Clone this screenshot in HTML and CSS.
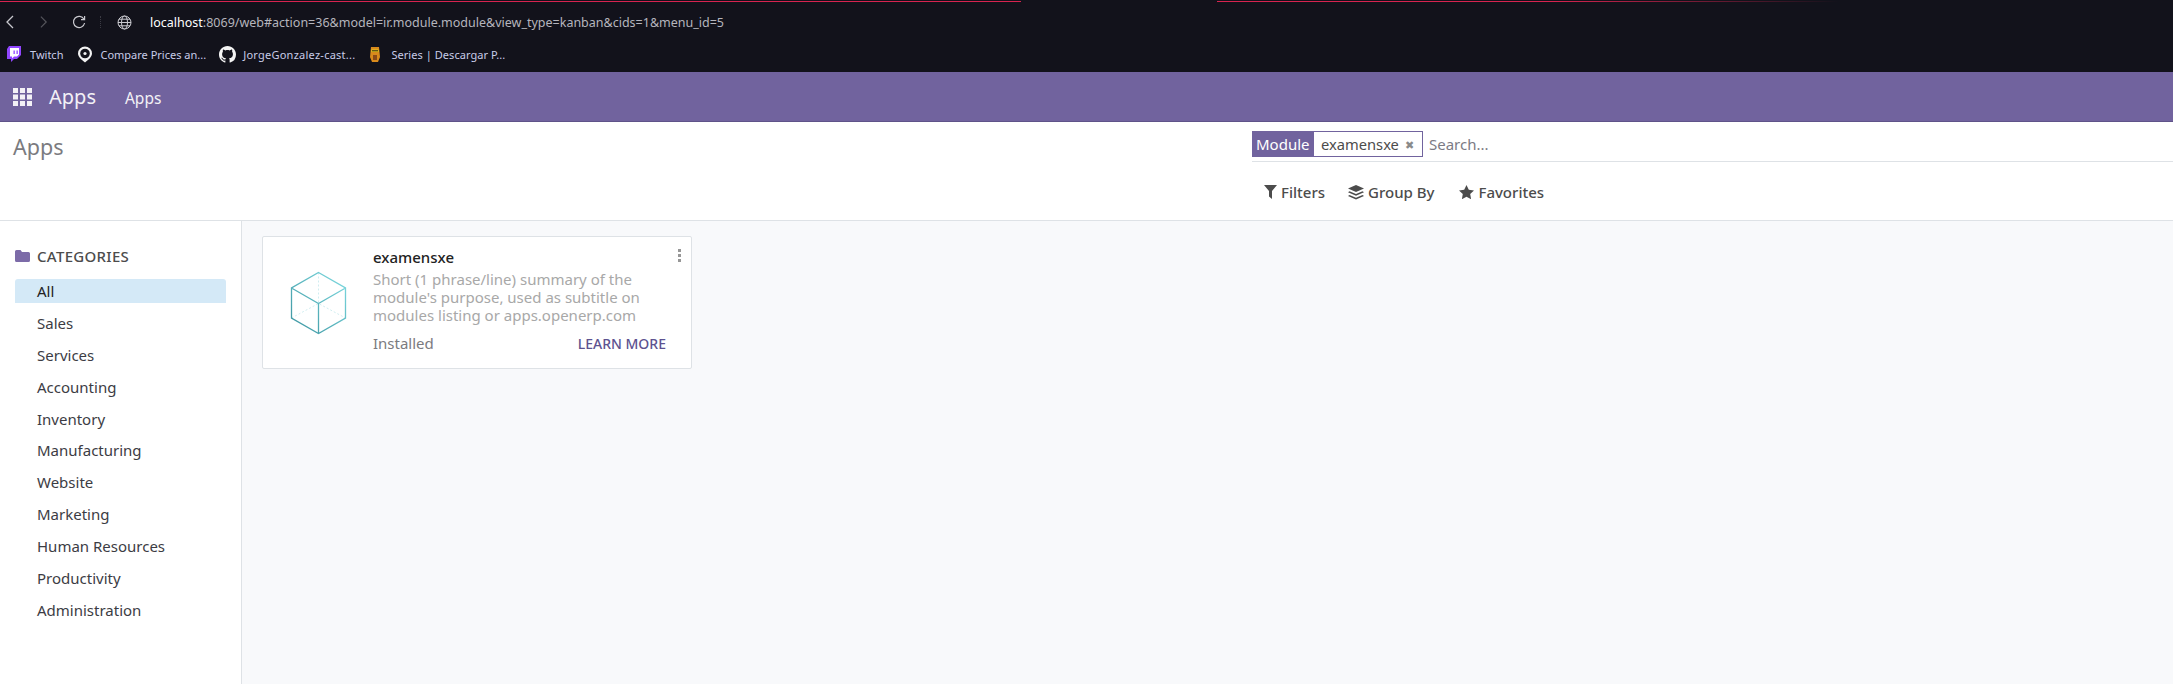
FILE: index.html
```html
<!DOCTYPE html>
<html lang="en">
<head>
    <meta charset="UTF-8">
    <meta name="viewport" content="width=device-width, initial-scale=1.0">
    <title>Apps</title>
    <link rel="stylesheet" href="styles.css">
</head>
<body>
    <div class="browser">
        <div class="tab-line">
            <div class="tab-line-left"></div>
            <div class="tab-line-right"></div>
        </div>
        <div class="address-row">
            <svg class="nav-back" width="9" height="14" viewBox="0 0 9 14"><path d="M8 1 2 7l6 6" fill="none" stroke="#c9c9cf" stroke-width="1.3"/></svg>
            <svg class="nav-forward" width="8" height="14" viewBox="0 0 9 14"><path d="M1 1l6 6-6 6" fill="none" stroke="#55555c" stroke-width="1.3"/></svg>
            <svg class="nav-reload" width="14" height="14" viewBox="0 0 14 14"><path d="M12 4.2A5.6 5.6 0 1 0 12.6 8" fill="none" stroke="#c9c9cf" stroke-width="1.2"/><path d="M12.6 1v3.6H9" fill="none" stroke="#c9c9cf" stroke-width="1.2"/></svg>
            <span class="nav-dots"></span>
            <svg class="nav-globe" width="15" height="15" viewBox="0 0 15 15" fill="none" stroke="#c9c9cf" stroke-width="1"><circle cx="7.5" cy="7.5" r="6.5"/><ellipse cx="7.5" cy="7.5" rx="3" ry="6.5"/><path d="M1 7.5h13M2 4.2h11M2 10.8h11"/></svg>
            <span class="url"><b>localhost</b>:8069/web#action=36&amp;model=ir.module.module&amp;view_type=kanban&amp;cids=1&amp;menu_id=5</span>
        </div>
        <div class="bookmarks">
            <div class="bookmark bm-twitch">
                <svg width="14" height="16" viewBox="0 0 14 16"><path d="M2 0h12v9l-4 4H7l-3 3v-3H0V3z" fill="#9146ff"/><path d="M3 2h9v6.5L10 10.500H7l-2 2v-2H3z" fill="#fff"/><path d="M6.500 4.500h1.300v3.500H6.500zM9.500 4.500h1.300v3.500H9.500z" fill="#9146ff"/></svg>
                <span>Twitch</span>
            </div>
            <div class="bookmark bm-compare">
                <svg width="16" height="17" viewBox="0 0 16 17"><path d="M8 .5a7 7 0 0 1 7 7c0 3.500-4 6.500-7 9-3-2.500-7-5.500-7-9a7 7 0 0 1 7-7z" fill="#f2f2f2"/><circle cx="8" cy="7.500" r="4.800" fill="#14141c"/><circle cx="8" cy="7.500" r="1.600" fill="#f2f2f2"/></svg>
                <span>Compare Prices an...</span>
            </div>
            <div class="bookmark bm-github">
                <svg width="17" height="17" viewBox="0 0 16 16"><path fill="#f4f4f4" d="M8 0C3.580 0 0 3.580 0 8c0 3.540 2.290 6.530 5.470 7.590.4.070.55-.17.55-.38 0-.19-.01-.82-.01-1.490-2.010.370-2.530-.49-2.690-.94-.09-.23-.48-.94-.82-1.130-.28-.15-.68-.52-.01-.53.63-.01 1.080.58 1.230.82.720 1.210 1.870.870 2.330.66.070-.52.280-.87.510-1.070-1.780-.2-3.640-.89-3.640-3.950 0-.87.310-1.590.82-2.150-.08-.2-.36-1.020.08-2.120 0 0 .67-.21 2.200.82.640-.18 1.320-.27 2-.27s1.360.09 2 .27c1.530-1.040 2.200-.82 2.200-.82.440 1.100.16 1.920.08 2.120.51.560.82 1.270.82 2.150 0 3.070-1.870 3.750-3.650 3.950.29.250.54.730.54 1.480 0 1.070-.01 1.930-.01 2.200 0 .21.150.46.550.38A8.010 8.010 0 0 0 16 8c0-4.420-3.580-8-8-8z"/></svg>
                <span class="bm-github-text">JorgeGonzalez-cast...</span>
            </div>
            <div class="bookmark bm-series">
                <svg width="12" height="17" viewBox="0 0 12 17"><path d="M2 1h8l1 10-2 5H3l-2-5z" fill="#d98a1c"/><path d="M2.500 3.500h7v2.500h-7z" fill="#e8d020"/><path d="M3 4.300h6v1H3z" fill="#2a2010"/><path d="M4 9h4v5H4z" fill="#8a4a18"/></svg>
                <span>Series | Descargar P...</span>
            </div>
        </div>
    </div>

    <nav class="navbar">
        <svg class="apps-grid" width="19" height="18" viewBox="0 0 19 18" fill="#f3f1f6">
            <path d="M0 0h5v5H0zM7 0h5v5H7zM14 0h5v5h-5zM0 6.500h5v5H0zM7 6.500h5v5H7zM14 6.500h5v5h-5zM0 13h5v5H0zM7 13h5v5H7zM14 13h5v5h-5z"/>
        </svg>
        <span class="brand">Apps</span>
        <span class="nav-link">Apps</span>
    </nav>

    <header class="control-panel">
        <h1 class="page-title">Apps</h1>
        <div class="cp-right">
            <div class="search-row">
                <div class="facet">
                    <span class="facet-label">Module</span>
                    <span class="facet-value">examensxe</span>
                    <span class="facet-remove">&#10006;</span>
                </div>
                <span class="search-placeholder">Search...</span>
            </div>
            <div class="filter-row">
                <span class="filter-btn filter-filters">
                    <svg width="13" height="14" viewBox="0 0 13 14"><path d="M0 0h13L8 6v8L5 11.500V6z" fill="#4c4c4c"/></svg>
                    Filters
                </span>
                <span class="filter-btn filter-group">
                    <svg width="16" height="15" viewBox="0 0 16 15" fill="#4c4c4c"><path d="M8 0l8 3.500L8 7 0 3.500z"/><path d="M1.500 6.300 8 9.100l6.500-2.800L16 7.200 8 10.700 0 7.200zM1.500 10 8 12.800 14.500 10l1.500.9L8 14.500 0 10.900z"/></svg>
                    Group By
                </span>
                <span class="filter-btn filter-favorites">
                    <svg width="15" height="14" viewBox="0 0 15 14"><path d="M7.500 0l2.300 4.700 5.200.8-3.800 3.600.9 5.100-4.600-2.400-4.600 2.400.9-5.100L0 5.500l5.200-.8z" fill="#4c4c4c"/></svg>
                    Favorites
                </span>
            </div>
        </div>
    </header>

    <div class="content">
        <aside class="sidebar">
            <div class="side-header">
                <svg width="15" height="12" viewBox="0 0 15 12"><path d="M1.500 0h4l1.500 2h6.500A1.500 1.500 0 0 1 15 3.500v7a1.500 1.500 0 0 1-1.500 1.500h-12A1.500 1.500 0 0 1 0 10.500v-9A1.500 1.500 0 0 1 1.500 0z" fill="#7c6ba8"/></svg>
                <span>CATEGORIES</span>
            </div>
            <ul class="side-list">
                <li class="side-item active">All</li>
                <li class="side-item">Sales</li>
                <li class="side-item">Services</li>
                <li class="side-item">Accounting</li>
                <li class="side-item">Inventory</li>
                <li class="side-item">Manufacturing</li>
                <li class="side-item">Website</li>
                <li class="side-item">Marketing</li>
                <li class="side-item">Human Resources</li>
                <li class="side-item">Productivity</li>
                <li class="side-item">Administration</li>
            </ul>
        </aside>
        <main class="kanban">
            <div class="card">
                <svg class="card-icon" width="57" height="64" viewBox="0 0 57 64" fill="none">
                    <defs>
                        <linearGradient id="cubeLine" x1="0" y1="1" x2="1" y2="0">
                            <stop offset="0" stop-color="#3a929e"/>
                            <stop offset="1" stop-color="#7fdce2"/>
                        </linearGradient>
                    </defs>
                    <g stroke="#c4e9ec" stroke-width="0.8" stroke-dasharray="2 2">
                        <path d="M28.500 1.500v31M1.500 47l27-14.500L55.500 47"/>
                    </g>
                    <path d="M28.500 1.500 55.500 17v30l-27 15.500L1.500 47V17zM1.500 17l27 15.500L55.500 17M28.500 32.500v30" stroke="url(#cubeLine)" stroke-width="1.300"/>
                </svg>
                <div class="card-body">
                    <div class="card-name">examensxe</div>
                    <p class="card-summary">Short (1 phrase/line) summary of the module's purpose, used as subtitle on modules listing or apps.openerp.com</p>
                    <div class="card-footer">
                        <span class="card-status">Installed</span>
                        <span class="card-learn">LEARN MORE</span>
                    </div>
                </div>
                <span class="card-menu"><i></i><i></i><i></i></span>
            </div>
        </main>
    </div>
</body>
</html>
```

FILE: styles.css
```css
* {
    box-sizing: border-box;
}

html,
body {
    height: 100%;
}

body {
    margin: 0;
    display: flex;
    flex-direction: column;
    font-family: "Noto Sans", sans-serif;
    font-size: 15px;
    color: #4c4c4c;
    background: #fff;
    overflow: hidden;
}

/* browser chrome */
.browser {
    height: 72px;
    background: #12121b;
    color: #d5d5dd;
    flex-shrink: 0;
}

.tab-line {
    display: flex;
    justify-content: space-between;
    height: 3px;
    padding-top: 1px;
}

.tab-line-left {
    width: 1021px;
    height: 1px;
    background: #d8234f;
}

.tab-line-right {
    width: 956px;
    height: 1px;
    background: linear-gradient(to right, #d8234f 0, #d8234f 35%, rgba(216, 35, 79, 0) 65%);
}

.address-row {
    display: flex;
    align-items: center;
    height: 38px;
    padding-left: 5px;
}

.nav-forward {
    margin-left: 26px;
}

.nav-reload {
    margin-left: 24px;
}

.nav-dots {
    width: 1px;
    height: 12px;
    margin-left: 14px;
    border-left: 1px dotted #3b3b44;
}

.nav-globe {
    margin-left: 16px;
}

.url {
    margin-left: 18px;
    font-size: 12.5px;
    color: #b5b5bd;
    white-space: nowrap;
}

.url b {
    font-weight: 400;
    color: #fff;
}

.bookmarks {
    display: flex;
    align-items: center;
    height: 26px;
    font-size: 11px;
    color: #c8cce8;
}

.bookmark {
    display: flex;
    align-items: center;
    white-space: nowrap;
}

.bm-twitch {
    margin-left: 7px;
    gap: 9px;
}

.bm-compare {
    margin-left: 14px;
    gap: 7px;
}

.bm-github {
    margin-left: 13px;
    gap: 7px;
}

.bm-github-text {
    letter-spacing: .25px;
}

.bm-series {
    margin-left: 14px;
    gap: 10px;
}

.bm-series span {
    letter-spacing: .05px;
}

/* odoo navbar */
.navbar {
    display: flex;
    align-items: center;
    flex-shrink: 0;
    height: 50px;
    padding-left: 13px;
    background: #71639e;
    border-bottom: 1px solid #5f5389;
    color: #f3f1f6;
}

.brand {
    margin-left: 17px;
    font-size: 20px;
}

.nav-link {
    margin-left: 29px;
    padding-top: 3px;
    font-size: 15.5px;
}

/* control panel */
.control-panel {
    display: flex;
    justify-content: space-between;
    flex-shrink: 0;
    height: 99px;
    border-bottom: 1px solid #dee2e6;
}

.page-title {
    margin: 0;
    padding: 10px 0 0 13px;
    font-size: 21.5px;
    font-weight: 400;
    color: #7b7b80;
}

.cp-right {
    width: 921px;
}

.search-row {
    display: flex;
    align-items: center;
    height: 40px;
    padding-top: 9px;
    padding-bottom: 4px;
    border-bottom: 1px solid #dee2e6;
}

.facet {
    display: flex;
    align-items: center;
    width: 171px;
    height: 26px;
    border: 1px solid #71639e;
    font-size: 15px;
}

.facet-label {
    display: flex;
    align-items: center;
    width: 61px;
    height: 100%;
    padding-left: 3px;
    background: #71639e;
    color: #fff;
}

.facet-value {
    margin-left: 7px;
    font-size: 14.7px;
    color: #4c4c4c;
}

.facet-remove {
    margin-left: 6px;
    font-size: 11px;
    color: #8a8a8a;
}

.search-placeholder {
    margin-left: 6px;
    color: #7b7b85;
}

.filter-row {
    display: flex;
    align-items: center;
    height: 58px;
    padding-top: 2px;
    padding-left: 12px;
    font-size: 15px;
    font-weight: 500;
}

.filter-btn {
    display: flex;
    align-items: center;
    gap: 4px;
    color: #4c4c4c;
}

.filter-group {
    margin-left: 23px;
}

.filter-favorites {
    margin-left: 25px;
}

/* content */
.content {
    display: flex;
    flex: 1;
    min-height: 0;
}

.sidebar {
    width: 242px;
    flex-shrink: 0;
    padding: 24px 15px 0;
    border-right: 1px solid #dee2e6;
    background: #fff;
}

.side-header {
    display: flex;
    align-items: center;
    gap: 7px;
    height: 22px;
    font-size: 15px;
    letter-spacing: .3px;
    font-weight: 500;
    color: #4c4c4c;
}

.side-list {
    list-style: none;
    margin: 12px 0 0;
    padding: 0;
    width: 211px;
}

.side-item {
    display: flex;
    align-items: center;
    height: 24px;
    margin-bottom: 7.9px;
    padding-left: 22px;
    color: #3c3c44;
}

.side-item.active {
    background: #d4e9f7;
    border-radius: 3px 3px 0 0;
    color: #222;
}

.kanban {
    flex: 1;
    padding: 15px 20px;
    background: #f8f9fb;
}

.card {
    position: relative;
    display: flex;
    width: 430px;
    height: 133px;
    padding-left: 27px;
    border: 1px solid #dee2e6;
    border-radius: 2px;
    background: #fff;
}

.card-icon {
    margin-top: 34px;
    flex-shrink: 0;
}

.card-body {
    flex: 1;
    margin-left: 26px;
    padding-top: 10px;
    padding-right: 25px;
}

.card-name {
    height: 20px;
    font-size: 15px;
    font-weight: 500;
    line-height: 20px;
    color: #222;
}

.card-summary {
    margin: 3px 0 0;
    font-size: 15px;
    line-height: 18px;
    color: #a8a8a8;
}

.card-footer {
    display: flex;
    justify-content: space-between;
    align-items: center;
    margin-top: 9px;
}

.card-status {
    color: #7b7b80;
}

.card-learn {
    font-size: 14px;
    font-weight: 500;
    color: #5d5290;
}

/* three dots over the card corner */
.card-menu {
    position: absolute;
    top: 12px;
    right: 10px;
    display: flex;
    flex-direction: column;
    gap: 2px;
}

.card-menu i {
    width: 3px;
    height: 3px;
    background: #979797;
}
```
